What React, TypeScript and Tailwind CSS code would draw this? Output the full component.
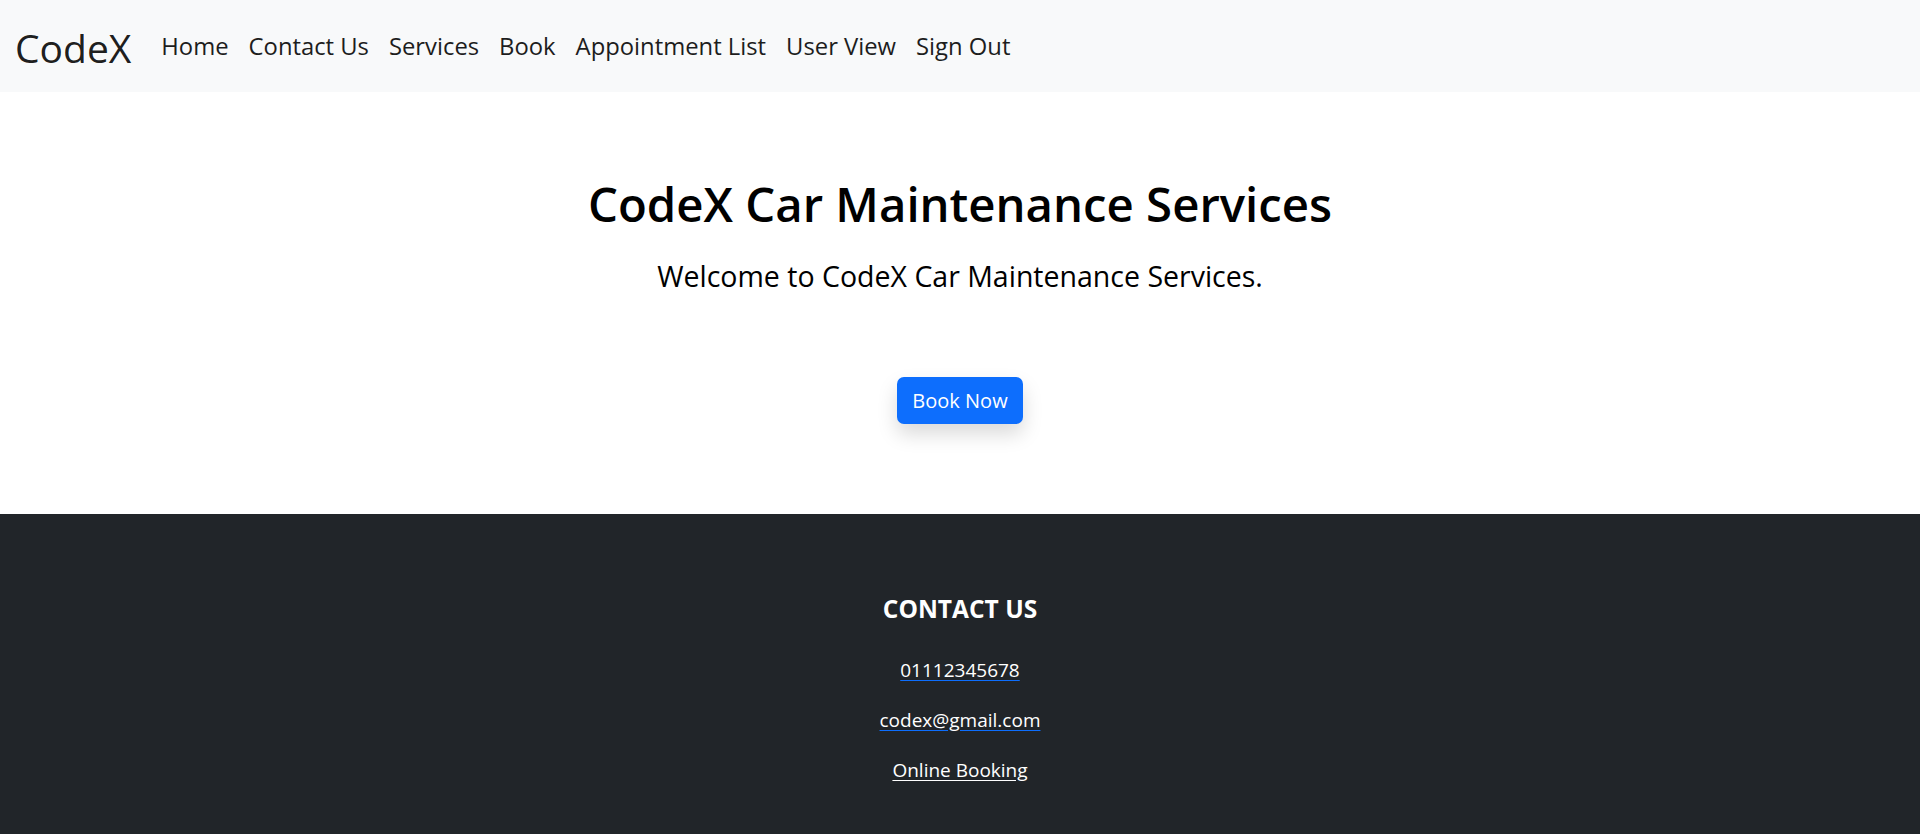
const navLinks = ["Home", "Contact Us", "Services", "Book", "Appointment List", "User View", "Sign Out"];

export default function App() {
  return (
    <div className="min-h-screen bg-white font-['Open_Sans',sans-serif]">
      {/* Navbar */}
      <nav className="flex h-[92px] items-center bg-[#f8f9fa] px-[15px] pt-[2px]">
        <a href="#" className="mr-[20px] text-[39px] leading-none text-black/90">CodeX</a>
        <ul className="flex items-center">
          {navLinks.map((link) => (
            <li key={link}>
              <a href="#" className="block px-[10px] text-[23.8px] leading-none text-[#1d1d1d]">
                {link}
              </a>
            </li>
          ))}
        </ul>
      </nav>

      {/* Hero */}
      <section className="flex h-[422px] flex-col items-center pt-[82px]">
        <h1 className="text-[47.3px] font-semibold leading-[60px] text-black">CodeX Car Maintenance Services</h1>
        <p className="mt-[23px] text-[28.5px] leading-[38px] text-black">
          Welcome to CodeX Car Maintenance Services.
        </p>
        <button className="mt-[82px] h-[47px] rounded-[7px] bg-[#0d6efd] px-[15px] text-[20px] text-white shadow-[0_10px_20px_rgba(0,0,0,0.15)]">
          Book Now
        </button>
      </section>

      {/* Footer */}
      <footer className="flex h-[320px] flex-col items-center bg-[#212529] pt-[79px] text-white">
        <h5 className="text-[24.5px] font-bold leading-[32px]">CONTACT US</h5>
        <div className="mt-[31px] flex flex-col items-center gap-[22px] text-[19px] leading-[28px]">
          <a href="#" className="underline decoration-[#0d6efd] underline-offset-[3px]">01112345678</a>
          <a href="#" className="underline decoration-[#0d6efd] underline-offset-[3px]">codex@gmail.com</a>
          <a href="#" className="underline decoration-white underline-offset-[3px]">Online Booking</a>
        </div>
      </footer>
    </div>
  );
}
